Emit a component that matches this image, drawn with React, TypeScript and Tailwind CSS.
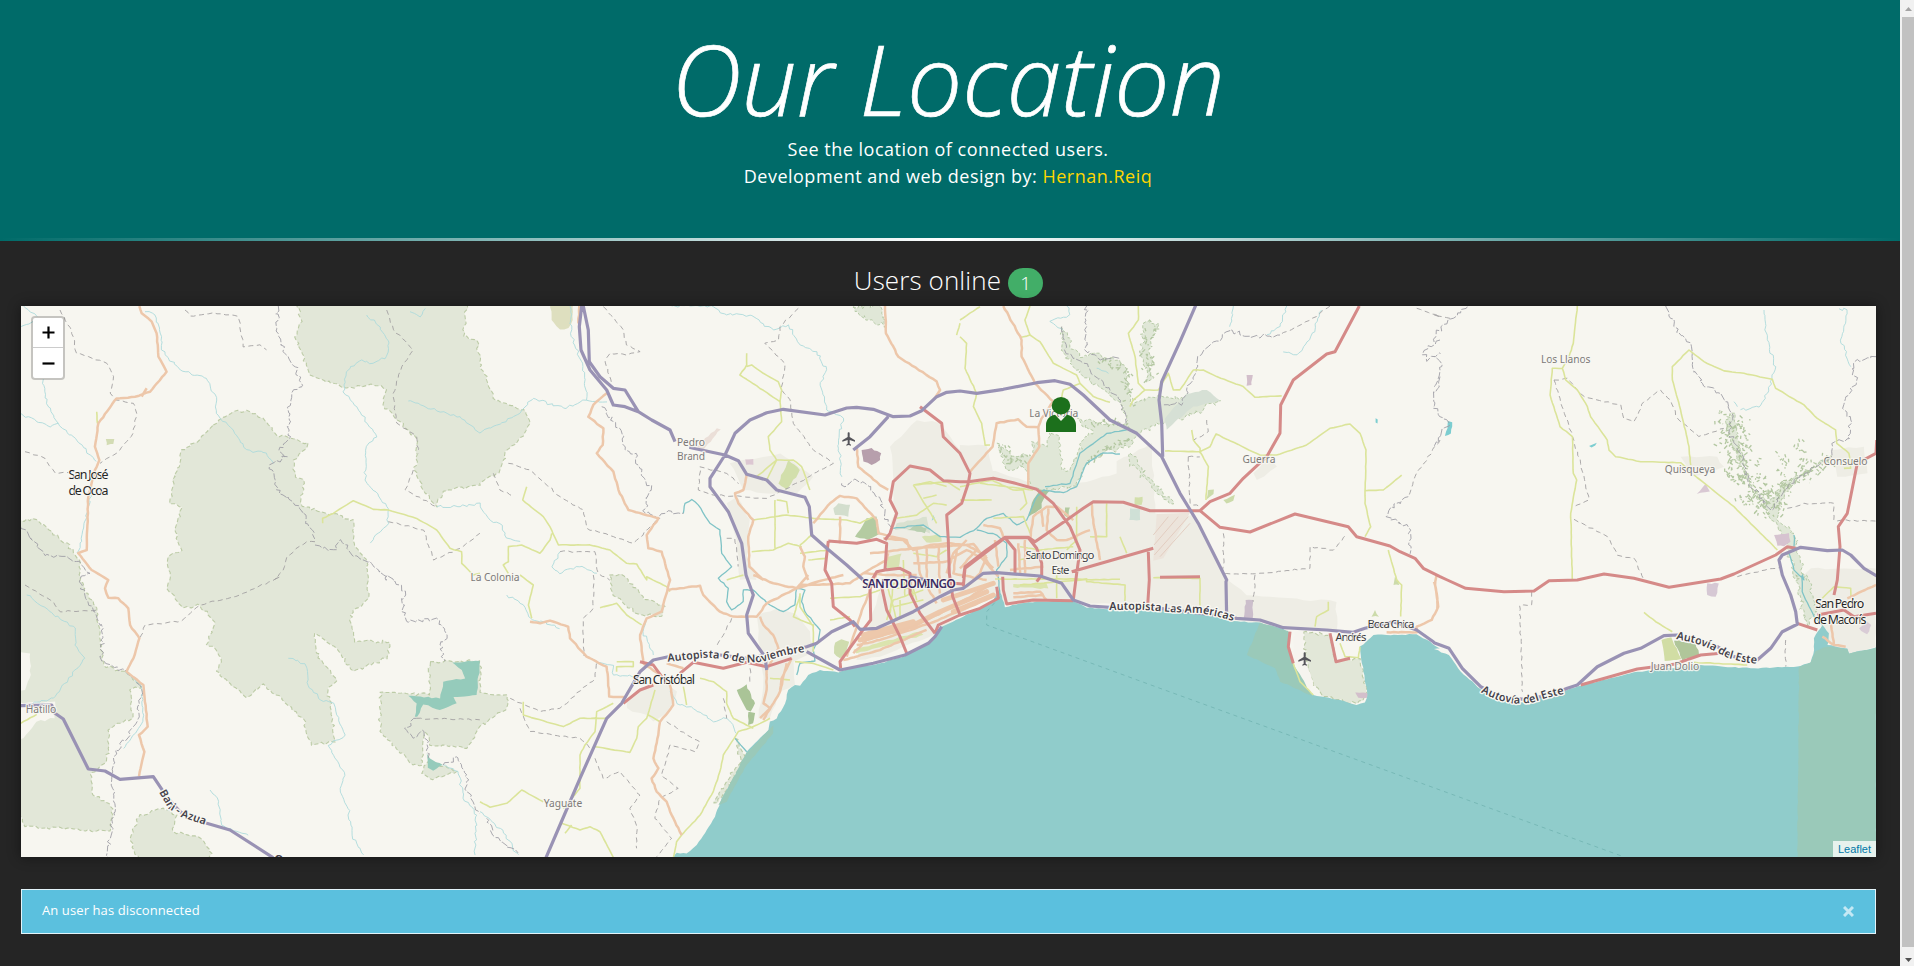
import React from "react";
import { MdFlight } from "react-icons/md";

// Survey sheets: every sheet has its own origin on the page and is digitised at three units per pixel.
const SHEETS: Record<string, [number, number]> = {
  A: [0, 290],
  B: [480, 290],
  C: [960, 290],
  D: [1434, 290],
  E: [0, 575],
  F: [480, 575],
  G: [960, 575],
  H: [1434, 575],
  J: [780, 440],
};

type Pt = [number, number];

function points(line: string): Pt[] {
  const out: Pt[] = [];
  let origin: Pt = [0, 0];
  for (const token of line.split(/[\s|]+/)) {
    if (!token) continue;
    if (SHEETS[token]) {
      origin = SHEETS[token];
      continue;
    }
    const [x, y] = token.split(",").map(Number);
    out.push([origin[0] + x / 3, origin[1] + y / 3]);
  }
  return out;
}

function noise(seed: number) {
  const v = Math.sin(seed * 127.1 + 311.7) * 43758.5453;
  return v - Math.floor(v) - 0.5;
}

// Subdivides a line and displaces the new vertices, for natural edges.
function roughen(pts: Pt[], amount: number, step: number): Pt[] {
  const out: Pt[] = [pts[0]];
  for (let i = 1; i < pts.length; i++) {
    const [x0, y0] = pts[i - 1];
    const [x1, y1] = pts[i];
    const n = Math.max(1, Math.round(Math.hypot(x1 - x0, y1 - y0) / step));
    for (let k = 1; k <= n; k++) {
      const t = k / n;
      const edge = k === n ? 0.3 : 1;
      const x = x0 + (x1 - x0) * t;
      const y = y0 + (y1 - y0) * t;
      out.push([x + noise(x + y * 3) * amount * edge * 2, y + noise(y + x * 5) * amount * edge * 2]);
    }
  }
  return out;
}

function toPath(lines: string[], opts: { rough?: number; step?: number; close?: boolean } = {}) {
  return lines
    .map((line) => {
      let pts = points(line);
      if (opts.close) pts = [...pts, pts[0]];
      if (opts.rough) pts = roughen(pts, opts.rough, opts.step ?? 4);
      return "M" + pts.map((p) => p[0].toFixed(1) + " " + p[1].toFixed(1)).join("L") + (opts.close ? "Z" : "");
    })
    .join("");
}

const SEA = [
  "F 578,848 590,833 620,836 650,810 680,765 705,725 725,670 765,605 795,550 800,530 865,465 870,440 890,430 915,385 925,345 945,330 960,332 985,300 1020,285 1075,292 1120,277 1190,268 1275,243 1345,205 1365,188 1385,155 1440,130 G 0,130 50,103 100,80 115,45 125,60 135,97 180,85 230,80 340,78 380,98 430,102 600,103 700,108 820,138 900,143 970,162 990,172 985,215 1000,265 1020,320 1060,360 1140,375 1190,390 1215,382 1222,360 1210,290 1200,215 1240,180 1280,180 1370,178 1410,200 1440,220 H 0,222 45,240 80,290 140,343 200,375 270,382 400,345 440,332 600,292 660,285 800,270 950,280 1090,275 1130,262 1140,225 1140,190 1165,150 1185,175 1180,210 1240,220 1245,235 1326,218 1326,900 -3000,900",
];
const SEA_RESERVE = [
  "H 1095,276 1130,262 1145,228 1180,215 1240,222 1245,236 1326,218 1326,860 1090,860",
  "G 900,143 985,168 985,215 1000,265 1055,362 960,320 945,280 860,240",
  "F 798,535 880,450 880,475 800,570 740,680 715,690",
];

const FOREST = [
  "A 640,405 700,365 740,360 790,385 830,435 925,460 880,510 885,560 910,570 905,650 1060,690 1065,770 1100,810 1105,870 E 1105,70 1050,120 1065,200 1170,200 1160,250 1060,290 1010,220 945,175 955,250 1010,310 985,350 1005,500 935,510 910,430 865,390 790,325 740,368 650,290 665,260 640,215 620,210 645,140 600,90 550,100 500,40 A 510,870 505,800 545,780 525,720 545,650 510,640 515,600 545,480 600,450",
  "A 890,40 905,95 885,140 930,255 1040,295 1120,285 1160,300 1150,345 1255,450 1245,540 1270,600 1310,650 1330,605 1440,585 B 0,580 60,540 80,480 130,440 150,400 130,360 40,325 20,260 0,235 A 1440,220 1430,150 1390,140 1400,40",
  "A 50,690 110,690 200,760 240,820 E 240,20 290,100 310,270 380,295 425,335 390,345 400,430 330,460 320,560 270,600 275,650 340,700 330,768 75,755 50,700",
  "E 415,855 390,790 420,720 490,700 530,720 520,770 600,790 635,835 630,855",
  "E 1290,260 1440,258 F 0,350 80,360 80,400 0,455 E 1440,455 1400,520 1290,510 1275,470 1265,570 1240,570 1140,470 1140,350 1220,355 1290,360",
  "E 1285,560 1370,590 1290,612 1265,595",
  "F 388,0 430,0 500,75 555,95 545,125 480,120 400,60",
  "F 765,490 795,550 725,670 702,685 760,590 785,560",
  "G 1030,172 1110,180 1128,260 1200,250 1222,360 1190,385 1090,365 1060,330 1040,260",
];
const FOREST_FINE = [
  "C 305,110 340,180 370,200 400,190 480,210 500,250 510,340 590,320 690,330 780,330 700,375 590,400 530,440 505,470 430,490 380,520 350,590 250,600 210,590 190,520 140,540 110,460 150,490 220,500 215,455 260,470 270,430 300,440 305,540 330,540 370,450 400,430 350,385 420,400 500,410 490,350 430,300 370,260 310,190",
  "C 550,100 600,100 570,150 575,270 560,270 545,180",
  "C 510,490 560,560 640,640 590,605 510,520",
  "D 880,380 905,370 920,480 940,570 1000,640 1040,590 1170,510 1195,500 1100,560 1050,610 1030,690 1080,730 1090,790 1120,870 1085,870 1050,740 1015,690 960,600 910,500 885,440",
  "H 1085,0 1120,0 1145,110 1120,150 1100,80",
  "B 1120,50 1200,50 1215,110 1180,95 1140,75",
];
const CLEARING = ["E 50,232 90,235 92,300 75,345 50,345", "E 50,385 165,380 165,430 110,440 70,490 50,500"];

const URBAN = [
  "J 335,130 390,75 440,0 540,30 580,70 760,130 830,150 1010,100 1010,65 1115,10 1125,220 1240,225 1330,400 1330,500 C 720,870 G 720,105 600,100 340,78 135,90 J 640,465 540,525 465,580 300,650 230,660 270,540 320,400 320,300 345,220",
  "B 1230,470 1310,390 1380,400 1440,480 C 0,465 80,465 100,550 25,580 B 1440,570 1300,530 1240,570",
  "G 720,0 780,0 860,60 1130,80 1130,165 970,158 820,135 720,105",
  "F 830,120 890,100 945,115 990,170 1000,230 940,260 945,330 900,350 870,430 835,430 850,330 840,220",
  "F 440,380 480,340 540,320 590,350 575,400 520,440 500,420 440,400",
  "B 750,520 900,490 1000,560 950,610 850,610 790,600",
  "B 740,640 770,620 810,690 800,800 830,870 780,870 770,750",
  "D 1190,480 1290,470 1300,550 1210,560",
  "D 1130,835 1326,835 H 1326,0 1326,215 1245,235 1180,205 1165,150 1140,120 1110,0",
  "D 740,500 850,500 870,530 780,560",
  "C 880,550 930,500 950,530 890,570",
];

const PATCHES: [string, string][] = [
  ["B 210,40 280,40 278,90 265,115 240,118 215,90", "#dedfbf"],
  ["B 1145,480 1175,475 1203,490 1200,510 1175,525 1150,515", "#b79fac"],
  ["B 925,510 960,540 920,600 895,580", "#d2dfab"],
  ["B 795,508 820,508 820,524 798,524", "#dcc7d2"],
  ["B 650,470 710,415 722,418 670,480", "#ebdfd8"],
  ["J 240,270 260,235 290,230 290,260 300,280 265,300 225,290", "#b4cba1"],
  ["J 160,205 175,190 210,195 205,230 165,225", "#d3decd"],
  ["J 325,350 365,340 355,383 320,385", "#d8e2b2"],
  ["J 350,250 440,230 450,280 400,265 345,270", "#d9e1d0"],
  ["J 380,270 410,255 440,265 435,280", "#b9cfb0"],
  ["J 425,290 480,285 485,305 440,308", "#d8e2b2"],
  ["J 700,432 800,430 805,446 700,442", "#dbe4ae"],
  ["J 220,630 420,575 430,585 230,640", "#dbe4ae"],
  ["F 770,345 800,328 815,370 825,385 812,410 800,405", "#aac497"],
  ["F 805,410 825,415 820,445 805,450", "#aac497"],
  ["F 1065,203 1085,193 1108,200 1100,232 1080,250 1062,235", "#cfdcae"],
  ["H 682,195 712,187 742,252 692,257", "#d1dda4"],
  ["H 720,197 785,200 795,240 745,256", "#b0c69a"],
  ["D 1020,735 1065,730 1070,755 1050,768 1030,768", "#d6c3d0"],
  ["D 788,612 815,580 828,605", "#d9c8d3"],
  ["C 860,255 878,255 875,285 860,287", "#d3bfcb"],
  ["G 857,75 880,75 878,130 850,130", "#cbbecb"],
  ["G 1185,352 1225,355 1222,368 1195,368", "#d3bfcb"],
  ["H 820,25 855,25 845,65 820,60", "#d6c8d4"],
  ["C 215,640 240,598 268,602 245,640 245,655 205,680", "#a9c49c"],
  ["C 315,652 330,652 325,685 312,675", "#b4cba1"],
  ["C 510,655 540,658 540,690 508,690", "#cfe0d6"],
  ["C 524,622 548,620 545,645 524,645", "#d2dfab"],
  ["C 680,310 740,300 780,332 700,350 620,420 615,385", "#d6e0d5"],
  ["C 790,630 825,615 820,632 800,640", "#ccdbaa"],
  ["C 745,600 762,598 760,612 740,628", "#ccdbaa"],
  ["A 318,447 343,447 340,462 320,466", "#d3dcb4"],
  ["D 42,393 54,397 50,430 32,437 40,415", "#7ccdd0"],
  ["D 465,468 488,458 484,466 472,473", "#7ccdd0"],
  ["C 1247,385 1253,388 1252,400 1247,398", "#7ccdd0"],
  ["B 1360,675 1365,685 1355,692", "#9bd6dc"],
  ["E 1355,262 1440,258 1430,360 1360,366 1370,385 1320,405 1270,388 1252,425 1245,425 1250,385 1225,362 1320,370 1330,320 1395,310 1385,285", "#95cbbb"],
  ["E 1280,535 1290,550 1328,570 1300,587 1283,578", "#95cbbb"],
  ["H 1300,140 1312,150 1300,178 1275,160", "#d9ccd6"],
  ["G 1003,170 1030,170 1030,235 1060,330 1050,350 1020,300 1000,240", "#f6f4ef"],
  ["G 1200,215 1238,202 1225,220", "#f7f6f0"],
  ["G 1305,5 1318,30 1300,30", "#ccdbaa"],
  ["G 1245,105 1257,125 1235,125", "#ccdbaa"],
];

const AIRSTRIP = ["C 590,672 690,668 610,805 580,812"];
const HATCH = ["C 580,735 625,680", "C 582,765 655,680", "C 583,795 685,680", "C 600,800 690,700"];

const RIVERS = [
  "A 62,45 110,80",
  "A 62,110 100,95",
  "A 435,65 465,75 480,130 485,180 540,240 620,265 650,330 650,370 700,420 740,480 800,490 820,520",
  "A 130,268 140,340 175,400 230,450 290,515",
  "A 62,370 110,395 150,412 175,400",
  "A 275,600 240,760 230,790",
  "A 1100,75 1140,110 1168,160 1160,200 1120,220 1085,210 1040,245 1030,305 1070,350 1130,440 1100,470 1095,570 1160,650 1165,700 1110,760",
  "A 1225,333 1320,365 1380,380 1440,430 B 0,430 50,405 120,370 160,325 250,355 320,330 380,335",
  "A 1230,65 1260,80 1275,55",
  "A 1310,650 1380,650 1440,640 B 0,650 30,690 60,700 80,745 120,755",
  "B 240,785 215,830 240,850 300,830 350,850",
  "B 270,48 272,130 310,230 320,330",
  "B 575,48 700,50 740,75 810,75 880,120 925,105 960,165 1010,185 1040,240 1020,285 1040,360 1090,385 1075,450 1085,560",
  "C 320,48 330,75 270,95 310,120",
  "C 820,48 810,110",
  "C 980,48 960,110 920,135",
  "C 1085,60 1050,150 1010,195 970,185",
  "C 410,235 445,250",
  "D 990,60 1000,150 1025,230 1000,310 975,350 920,360",
  "D 1215,56 1240,60 1220,150 1250,230",
  "D 900,335 910,350",
  "E 80,60 150,110 225,160 225,210 255,250 160,370 80,390",
  "E 865,250 915,265 925,330 960,375 1000,385 1035,480 985,510 1035,600 1020,650 1045,700 1055,780 1090,840",
  "E 375,290 425,335 430,440 370,520",
  "E 1330,570 1375,590 1390,670 1430,720 1425,840",
  "E 630,645 655,680 665,750 745,780",
  "F 80,60 130,90 150,130 240,160",
  "F 570,350 600,390 640,400 700,440 740,430 770,475",
  "F 500,130 490,170 520,240",
  "F 0,710 60,760 115,840",
  "F 350,265 400,270 400,300 480,305",
];
const RIVERS_MAJOR = [
  "B 610,670 615,640 635,628 655,645 690,700 720,720 725,790 755,830 715,865 F 715,10 745,40 740,80 755,105 790,80 790,45 820,45 870,90 910,110 945,90 950,40 975,45 965,80 975,110 1020,165 1015,200 1000,225 1005,258 960,265 950,300",
  "B 1240,715 1330,705 1380,740 1440,742 C 0,742 50,715 80,685 130,670 170,705 200,690 230,620 250,600",
  "C 50,720 110,735 140,760 140,800 110,840 G 115,10 120,60",
  "C 250,600 310,608 350,590 380,520 430,488 480,492",
  "C 255,590 330,580 360,490 440,430 500,420",
  "D 1065,790 1080,840 1110,870 H 1105,0 1105,50 1140,125",
  "D 1080,735 1080,770",
  "F 765,490 800,530",
  "H 1165,150 1140,125",
];

const BORDERS = [
  "A 180,60 215,120 230,190 320,220 340,260 330,310 350,330 400,340 410,370 400,430 350,490 300,520",
  "A 75,485 135,505 165,548 205,548",
  "A 555,60 570,78 640,68 715,80 730,170 780,165 800,180",
  "A 1160,60 1180,120 1240,180 1205,230 1180,310 1190,400 1250,440 1255,490",
  "A 1165,695 1270,720 1300,810 1380,775 1440,730",
  "A 945,755 920,755 860,800 850,840 825,868 E 840,5 720,60 600,90 545,138 435,150 420,190",
  "A 1240,540 1215,600 1310,650",
  "E 75,30 160,80 180,110 290,105",
  "E 1250,430 1440,435",
  "B 85,520 150,540 240,620 310,660 320,715 400,740 460,760 530,690",
  "B 40,550 60,600 100,620",
  "B 240,785 345,785 355,850 390,870",
  "B 370,50 430,120 440,165 480,185 440,195 390,190 375,215 395,280",
  "B 955,55 900,110 895,150 855,160 915,220 905,300 930,330 940,400 1000,480 1060,520 1000,550 960,575 860,625 700,615 655,600 660,530 740,550 775,580",
  "B 740,745 765,745 775,830",
  "F 340,0 340,100 310,130 310,240 350,260 345,310 240,400 180,410 90,370",
  "F 120,400 150,470 300,490 330,520",
  "F 345,550 370,610 420,590 480,660 450,700 470,750 470,820",
  "F 560,440 620,480 660,500 645,530 570,510 545,600 595,640 540,670 525,730 575,790 530,845",
  "F 755,130 710,215",
  "F 810,280 810,330",
  "F 730,370 740,430",
  "C 1110,48 1070,80 960,135",
  "C 1370,55 1440,80 D 0,75 50,85",
  "C 685,500 690,640 720,650",
  "C 685,500 720,500",
  "C 790,730 790,850 900,850 1050,835 1050,770 1120,780 1160,735",
  "C 740,390 745,425 700,450",
  "C 1440,450 1370,550 1345,620",
  "G 885,0 880,80",
  "D 360,270 400,265 450,320 560,345 570,385 600,395 630,335 680,300 710,330 730,385 795,440 870,415",
  "D 360,270 415,440 440,520 465,630 420,650",
  "D 420,688 520,740 550,795 600,805 630,868",
  "D 1060,655 1110,640 1200,640 1200,690 1326,693",
  "D 910,860 1040,830",
  "H 293,50 293,90 257,92 265,350",
  "H 1055,195 1055,275",
];
const BORDERS_WINDING = [
  "A 835,48 830,110 850,185 885,230 905,290 875,310 865,380 870,440 835,480 860,500 810,525 830,600 900,655 945,745",
  "A 945,765 1000,780 1020,750 1060,800 1110,815 1160,870 E 1160,0 1215,50 1205,110 1225,140 1310,130 1340,180 1320,210 1335,260",
  "A 62,710 130,790 180,800 240,815 270,850 240,868 E 240,20 290,130 310,160 305,260 380,292 425,340 410,440 340,545 335,600 345,700 320,845",
  "B 365,350 430,440 435,480 470,490 465,520 515,600 490,660 540,685 545,670 565,662 610,670",
  "B 1085,580 1095,590 1120,570 1150,575 1200,620 1215,680 1240,715",
  "E 1250,430 1215,460 1240,488 1265,465 1285,500 1285,550",
  "E 1330,570 1370,545 1400,600 1400,650 1440,715",
  "F 20,730 40,780 115,835",
  "C 380,48 375,180 420,210 480,205",
  "C 960,135 870,140 810,120 715,200 715,230 690,280 670,340 610,345",
  "C 1440,150 1390,180 1400,215 1440,190",
  "D 100,50 50,85 20,110 0,160",
  "D 0,290 25,230 0,200",
  "C 1440,260 1420,320 D 0,355 45,400 0,468",
  "C 1345,620 1285,660 1280,680 1345,710 1350,790",
  "D 695,48 720,110 770,160 775,225 810,290 860,310 895,370 885,430 930,500 940,570 1015,660 1050,600 1160,520 1195,500",
  "D 1326,200 1270,210 1250,235 1270,270 1235,320 1230,360 1250,390 1245,445 1200,455 1195,500",
  "C 305,110 320,190 370,220 480,330 500,400",
];

const TERTIARY = [
  "A 968,700 968,685 1000,670 1060,632 1120,658 1165,660 1250,685 1310,720 1350,775 1385,785 1385,820 1420,855 1440,850",
  "B 85,850 70,825 85,815 85,770 125,765 180,790 210,750 215,730",
  "B 140,590 128,630 190,680 210,710 235,765 330,765 390,780 440,820 470,822 500,870 F 500,5 560,35 570,50",
  "F 120,0 160,30 145,90 155,130",
  "B 800,190 800,225 780,255 900,335 905,300 895,275 850,250 815,225 800,230",
  "B 900,335 905,395 865,440 870,480 890,510 830,560",
  "B 890,510 860,570",
  "B 890,510 940,510 965,530 990,600",
  "B 885,630 885,775",
  "B 820,690 920,675 1000,685 1100,690 1140,700 1180,680",
  "B 815,785 880,780 925,760 965,770",
  "B 890,630 920,635 925,670",
  "B 985,810 1040,805",
  "B 995,735 960,765",
  "B 740,870 790,855",
  "B 1305,585 1400,575 1440,600",
  "B 1250,685 1310,675 1360,640 1400,645",
  "F 130,380 130,420 250,455 300,430 380,430",
  "F 400,385 350,410 345,470 315,510 300,540 300,640 250,700",
  "F 345,515 450,532 470,490 475,455 500,430 525,345",
  "F 505,420 540,440",
  "F 0,680 30,697 80,685 125,645 190,680",
  "F 245,745 300,765 330,755 360,770 400,848",
  "F 255,775 275,750",
  "F 580,848 590,800 605,780 660,720 700,650 720,590 730,540 775,470 820,455 870,430",
  "F 660,310 700,320 740,350 740,385 760,430 820,460",
  "F 410,260 460,260 460,275 410,275 410,290",
  "F 610,335 620,390",
  "F 945,260 1000,265 1060,285",
  "F 960,60 940,125 1000,150 1000,230",
  "F 360,98 410,85 440,120 485,150",
  "F 870,310 930,315",
  "C 210,48 195,90 210,135 180,143",
  "C 210,135 240,155 280,220 350,255 360,280 400,320 450,337",
  "C 303,330 310,300 360,280",
  "C 535,48 535,90 505,130 525,200 535,280 555,300 520,330 510,350",
  "C 555,300 595,300 625,250 640,300 660,300 700,240 730,240 770,260 850,290 885,322 965,318",
  "C 0,90 60,50",
  "C 0,140 20,160 15,235 50,310 40,350 65,400 75,465 90,465",
  "B 1440,100 1430,135",
  "C 615,483 720,485 745,530 738,630",
  "C 695,420 700,450 720,475 720,490",
  "C 720,485 750,470 768,432 900,495 950,495 1040,465 1110,415 1170,402 1200,430 1218,480 1215,640 1232,710 1215,740",
  "C 1215,602 1270,600 1325,555",
  "C 1285,780 1310,870 G 1325,30 1322,125",
  "C 440,670 440,740 390,740",
  "C 0,630 95,630",
  "C 0,590 95,570 160,600 190,600 200,640 180,660",
  "C 480,740 500,790",
  "G 105,12 380,12 380,20 495,30 495,100",
  "G 580,8 720,10 720,95",
  "G 1105,80 1105,105 1070,125 1065,155",
  "G 1000,265 1020,320 1060,360",
  "G 1140,205 1155,245 1195,248 1200,215",
  "G 290,0 290,70",
  "D 430,48 418,160 405,200 385,235 355,235 348,315 378,410 415,440 418,550 428,570 410,670 415,870",
  "D 385,235 395,270 430,300 460,350 470,380 520,450 525,480 545,500 620,515 740,518 770,545",
  "D 770,525 765,470 740,360 715,270 715,230 765,180 810,215 870,243 930,250 1015,268 1025,295 1110,345 1150,385 1205,420 1208,460 1245,490 1250,535 1230,535",
  "D 780,555 900,650 1030,780",
  "H 630,112 665,140 715,170",
  "H 780,262 940,270",
  "H 1165,70 1200,35 1250,40 1250,70",
  "E 62,445 110,418",
  "A 290,365 292,400",
  "J 400,135 450,125 500,140",
  "J 400,135 470,250",
  "J 430,175 470,165",
  "J 545,180 635,180",
  "J 600,130 720,145 760,150",
  "J 60,340 145,330",
  "J 320,430 350,540 430,500",
  "J 340,500 430,480",
  "J 420,440 340,430 330,520",
  "J 720,435 900,420 1020,418",
  "J 890,200 890,300 860,330",
  "J 980,190 980,290 950,290",
  "J 150,475 240,470 300,450",
  "J 150,540 210,530",
  "J 370,360 375,470",
  "J 360,480 360,530",
  "J 385,420 400,470",
  "J 60,460 60,500 100,560",
  "J 350,445 400,445 410,480",
  "J 640,235 730,230 750,280",
  "J 720,320 780,330 880,320",
  "J 715,360 790,350",
  "J 320,540 340,480 430,450",
  "J 400,340 470,350 500,330",
];

const SECONDARY = [
  "A 418,48 425,70 455,95 470,130 475,200 500,245 450,305 405,320 350,325 295,400 285,470 298,510 285,540 265,620 260,780 235,790 255,815 275,840 325,870 E 325,15 315,40 325,68 355,70 385,100 390,150 418,190 400,250 380,290 430,330 443,455 417,480 433,530 417,605",
  "A 425,320 440,295",
  "B 298,48 295,100",
  "B 380,310 340,345 325,380 370,415 368,465 350,490 400,545 415,600 445,660 535,685 500,735 505,775 545,785 570,870 F 570,15 545,110 500,130 480,180 490,265 540,300 570,330 580,390 540,440 535,480 520,550 535,580 515,610 530,650 560,680 575,720 605,780",
  "F 565,45 660,32 670,60 720,110 760,125 830,125 860,85 950,40 1030,15 1090,0",
  "F 820,0 880,25 950,40 985,0",
  "F 150,140 180,145 210,137 265,155 270,190 320,245 380,275 388,365 440,367",
  "F 840,125 850,150 880,180 895,220 860,285 860,345 850,385 870,400 840,430",
  "F 920,265 900,350 850,435",
  "F 935,250 905,310 900,345",
  "F 560,265 610,280",
  "B 1215,48 1218,130 1255,200 1370,275 1380,300 1360,330",
  "B 1130,470 1135,530 1200,585 1225,600",
  "B 800,555 790,600 765,610 775,640 820,690 805,740 808,830 850,870",
  "B 1000,700 1050,640 1080,618 1130,625 1190,690 1195,730 1280,750 1290,780",
  "B 1080,680 1080,760",
  "C 130,48 185,150 185,200 225,280 280,335 245,385 235,410 238,470 205,520 205,590",
  "C 235,412 200,410 175,388 110,400 98,470 30,545",
  "B 960,770 975,800 970,830 985,870",
  "B 1150,850 1220,810 1225,790",
  "G 1430,0 1425,30 1435,95 1415,135 1370,155 1370,172 1280,172",
  "H 0,20 10,70 10,100",
  "H 1165,185 1200,210 1235,215",
  "H 1190,140 1200,210",
  "H 1240,70 1326,30",
  "J 310,295 370,300 400,330 450,315 500,310 560,315 620,350",
  "J 270,340 400,325 500,318 580,312 640,385",
  "J 500,365 560,330 600,350 655,410",
  "J 220,640 260,600 400,560 520,500 640,430",
  "J 230,615 300,600 450,550 640,470",
  "J 410,330 420,400 470,490",
  "J 440,325 440,440",
  "J 475,310 480,460",
  "J 530,330 520,400 620,420",
  "J 400,370 500,365",
  "J 190,660 300,630 440,570",
  "J 200,650 250,500 290,400",
  "J 410,405 330,405 250,400 210,430 60,435",
  "J 750,300 760,230 800,200 830,200 880,240",
  "J 785,210 790,260",
  "J 805,205 800,270 830,300 860,300 930,270",
  "J 935,190 940,250 960,360",
  "J 645,300 655,380",
  "J 735,300 735,400",
  "J 715,310 720,400",
  "J 690,390 790,380",
  "J 610,255 660,265 670,290",
  "J 700,460 780,455 800,480",
  "J 700,472 790,465",
  "J 560,300 520,340 500,400",
  "J 590,330 540,385",
  "J 620,350 600,400 560,440",
];
const SECONDARY_WIDE = ["J 240,600 390,560 480,515 620,455", "J 520,515 640,465", "J 490,480 640,430", "J 250,585 400,545"];

const TRUNK = [
  "C 1198,48 1125,185 1100,192 1000,270 962,345 960,430 920,500 850,565 810,610 750,635 720,662 690,662 570,662 490,637 400,635 370,655 320,690 225,755 205,742 135,742 80,780 15,830 10,865",
  "C 720,662 780,712 870,726 1005,672 1165,710 1190,740 1290,768 1320,785 1365,805 1390,835 1440,860 H 40,15 95,40 210,50 300,48 345,17 430,15 510,-3 600,10 705,37 860,12 D 900,852 1025,795 1060,770 1085,775",
  "B 1320,350 1385,400 1390,440 1440,490 C 0,490 30,550 25,580",
  "J 565,125 540,125 490,122 450,90 390,78 340,125 330,180 350,220 330,280 315,300",
  "J 565,125 640,115 700,128 770,148 820,190 870,260 900,330 890,400 880,480",
  "J 565,130 545,190 500,225 505,300 508,400 518,470 540,525",
  "J 145,303 230,310 290,298 320,310 315,390 290,395 270,430 272,540 245,575 180,665 182,685",
  "J 145,303 135,390 155,430 160,500 210,540 225,560",
  "J 315,390 360,385 390,400 390,460 420,520 465,580",
  "J 305,440 320,510 360,590 380,640",
  "J 550,440 555,385 675,293 745,293 770,325 785,370 785,405 770,425",
  "J 675,293 705,330 705,400",
  "J 520,430 550,432",
  "C 335,845 580,775",
  "C 565,785 568,870 G 563,90",
  "C 600,862 720,860",
  "J 465,580 475,555 540,525 600,505 655,475 650,440",
  "J 668,410 670,450 680,492 760,480 880,482",
  "D 1328,450 1326,490 1270,520 1240,670 1213,710 1218,770 1210,870 H 1200,60",
  "H 1090,145 1150,165",
  "H 1150,120 1230,105 1260,125 1326,115",
  "H 440,330 610,282 720,268 800,240 860,235",
  "G 990,170 985,215 1000,265",
  "G 1110,175 1128,260 1170,250",
  "F 430,385 480,345 520,330",
  "F 480,260 520,270 545,305",
  "F 600,295 640,262 730,280 800,262 860,275 935,250",
];

const MOTORWAY = [
  "B 306,40 298,110 303,180 330,240 380,300 400,345 435,350 475,365 515,390 570,420 585,455",
  "B 628,472 640,475 735,495 775,512 800,553 860,570 890,600 975,622 988,650 995,735 1040,775 1100,825 1150,870",
  "J 390,410 440,420 480,440",
  "B 308,40 325,120 328,215 360,260 400,295 435,300 475,365",
  "F 860,285 855,245 805,175 800,120 820,60 798,0 B 785,760 745,665 690,590 690,565 735,495 765,430 810,390 860,368 910,358 1035,375 1100,354 1130,352 1180,358 1240,380 1290,378 1325,362 1370,320 1400,307 1440,303 C 50,310 130,298 230,278 285,272 330,283 370,315 450,390 530,430 605,500 660,610 715,700 755,780 800,870 G 798,20 800,130",
  "B 1120,480 1170,440 1225,380",
  "C 708,44 660,155 605,275 597,330 605,400 608,500",
  "F 195,855 240,750 300,610 380,430 425,385 480,290 520,255 565,245 650,240 720,240 800,250 900,235 980,215 J 110,610 155,575 220,545 240,568 290,565 400,515 480,470 520,450 550,445 610,400 650,398 780,408 845,430 880,480 930,498 990,502",
  "F 980,230 1080,285 1180,265 1275,240 1345,205 1365,185 1385,155",
  "G 445,97 600,100 760,120 830,130 900,135 970,158 1100,165 1180,172 1215,160 1300,140 1370,165 1420,200 H 0,203 45,220 85,280 140,335 200,365 270,373 350,360 400,340 430,330 490,275 570,235 620,220 690,182 730,180 800,205 850,215 900,245 970,255 1010,220 1045,170 1090,148 1085,110 1070,60 1045,0 D 1035,810 1045,795 1100,772 1180,782 1225,780 1250,795 1290,835 1328,858",
  "E 62,392 155,390 165,415 190,432 265,582 315,588 360,613 460,605 500,665 540,710 620,745 690,765 830,855",
];

const FERRY = ["G 120,65 80,110 80,150 600,340 1000,485 1440,645 H 560,842"];

const SHRUB_AXES: [string, number][] = [
  ["D 870,390 890,390 900,460 920,500 940,570 970,600 1015,660", 24],
  ["D 1020,650 1050,600 1100,560 1180,510", 14],
  ["D 1040,490 1050,520 1045,590", 8],
  ["D 1090,450 1115,500 1110,540", 8],
  ["D 860,550 900,560 940,560", 8],
  ["D 910,620 960,640 1000,670", 10],
  ["C 565,100 570,270", 10],
  ["C 420,210 500,240 510,340", 7],
  ["C 130,460 150,520 200,500", 8],
  ["C 400,400 430,390 500,410", 7],
  ["C 390,520 430,480 510,450", 6],
];

function shrubs() {
  let d = "";
  SHRUB_AXES.forEach(([axis, spread], n) => {
    roughen(points(axis), 0.5, spread > 20 ? 0.55 : spread > 12 ? 1 : 1.7).forEach(([x, y], i) => {
      const px = x + noise(i * 3 + n * 91) * spread * 2 * (0.35 + Math.abs(noise(i * 7)));
      const py = y + noise(i * 5 + n * 57) * spread * 0.8;
      d += `M${px.toFixed(1)} ${py.toFixed(1)}l${(noise(i * 11) * 7).toFixed(1)} ${(noise(i * 13) * 7).toFixed(1)}`;
    });
  });
  return d;
}

type LabelProps = { x: number; y: number; w: number; size: number; color: string; weight?: number; children: string };

function Label({ x, y, w, size, color, weight = 400, children }: LabelProps) {
  return (
    <text x={x - w / 2} y={y} textLength={w} fontSize={size} fontWeight={weight} fill={color} stroke="#f8f7f2" strokeOpacity={0.85} strokeWidth={2.4} strokeLinejoin="round" paintOrder="stroke">
      {children}
    </text>
  );
}

function RoadLabel({ id, path, length, children }: { id: string; path: string; length: number; children: string }) {
  return (
    <>
      <path id={id} d={toPath([path])} fill="none" />
      <text fontSize={11} fontWeight={600} fill="#45424a" stroke="#f8f7f2" strokeWidth={2.8} strokeLinejoin="round" paintOrder="stroke" textLength={length}>
        <textPath href={"#" + id} textLength={length}>{children}</textPath>
      </text>
    </>
  );
}

const TOWN = "#242424";
const VILLAGE = "#7d7a78";

function MapCanvas() {
  return (
    <svg viewBox="21 306 1855 551" className="block h-[551px] w-full bg-[#f7f6f0] font-['Noto_Sans',sans-serif]" fill="none" strokeLinejoin="round">
      <path d={toPath(URBAN, { close: true, rough: 1.2, step: 8 })} fill="#eeede5" />
      <path d={toPath(FOREST, { close: true, rough: 1.7, step: 3.2 })} fill="#e2e7d8" stroke="#bccba6" strokeWidth={1.1} strokeDasharray="4 2.5" />
      <path d={toPath(FOREST_FINE, { close: true, rough: 2.6, step: 2.8 })} fill="#e0e7d7" stroke="#b2c7a2" strokeWidth={0.9} strokeDasharray="3 2" />
      <path d={toPath(CLEARING, { close: true, rough: 1 })} fill="#f7f6f0" />
      {PATCHES.map(([line, color]) => (
        <path key={line} d={toPath([line], { close: true, rough: 0.7 })} fill={color} />
      ))}
      <path d={toPath(AIRSTRIP, { close: true })} fill="#ece4db" />
      <path d={toPath(HATCH)} stroke="#dfc6b9" strokeWidth={0.8} />
      <path d={shrubs()} stroke="#b3c7a1" strokeWidth={1.3} />
      <path d={toPath(SEA, { close: true, rough: 0.5 })} fill="#90cccb" />
      <path d={toPath(SEA_RESERVE, { close: true, rough: 0.5 })} fill="#9ac9b9" />
      <path d={toPath(FERRY)} stroke="#74b5b3" strokeWidth={0.9} strokeDasharray="4 4" />
      <path d={toPath(RIVERS, { rough: 1.4, step: 3.2 })} stroke="#addadb" strokeWidth={0.9} />
      <path d={toPath(RIVERS_MAJOR, { rough: 0.5 })} stroke="#7fc3c6" strokeWidth={1.3} />
      <path d={toPath(BORDERS, { rough: 0.8 })} stroke="#a3a0a2" strokeWidth={0.9} strokeDasharray="5 3.5" />
      <path d={toPath(BORDERS_WINDING, { rough: 2.2, step: 3 })} stroke="#9f9ea6" strokeWidth={0.9} strokeDasharray="7 2" />
      <path d={toPath(TERTIARY, { rough: 0.25 })} stroke="#dbe49a" strokeWidth={1.6} />
      <path d={toPath(SECONDARY_WIDE)} stroke="#edc8ab" strokeWidth={5} strokeLinecap="round" />
      <path d={toPath(SECONDARY, { rough: 0.4 })} stroke="#edc7aa" strokeWidth={2.5} />
      <path d={toPath(TRUNK)} stroke="#d58a88" strokeWidth={3} />
      <path d={toPath(MOTORWAY)} stroke="#9992b4" strokeWidth={3.2} />

      <MdFlight x={841} y={431} width={16} height={16} color="#55545a" />
      <MdFlight x={1297} y={651} width={16} height={16} color="#55545a" />

      <Label x={88.5} y={479} w={40} size={12.4} color={TOWN}>San José</Label>
      <Label x={88.5} y={495} w={40} size={12.4} color={TOWN}>de Ocoa</Label>
      <Label x={691} y={446} w={28} size={10.3} color={VILLAGE}>Pedro</Label>
      <Label x={691} y={459.5} w={28} size={10.3} color={VILLAGE}>Brand</Label>
      <Label x={1053.8} y={417} w={49} size={10.3} color={VILLAGE}>La Victoria</Label>
      <Label x={1259} y={463} w={33} size={10.3} color={VILLAGE}>Guerra</Label>
      <Label x={1565.7} y={363} w={49.5} size={10.3} color={VILLAGE}>Los Llanos</Label>
      <Label x={1690} y={473} w={50.5} size={10.3} color={VILLAGE}>Quisqueya</Label>
      <Label x={1845.5} y={465} w={44} size={10.3} color={VILLAGE}>Consuelo</Label>
      <Label x={495} y={581} w={49} size={10.3} color={VILLAGE}>La Colonia</Label>
      <Label x={563} y={807} w={38.5} size={10.3} color={VILLAGE}>Yaguate</Label>
      <Label x={41} y={713} w={30.5} size={10.3} color={VILLAGE}>Hatillo</Label>
      <Label x={1675} y={669.5} w={48.5} size={10.3} color={VILLAGE}>Juan Dolio</Label>
      <Label x={1060} y={559} w={69} size={11.4} color="#3c3b3f">Santo Domingo</Label>
      <Label x={1060.5} y={574} w={18} size={11.4} color="#3c3b3f">Este</Label>
      <Label x={1391} y={628} w={47} size={11.4} color="#3c3b3f">Boca Chica</Label>
      <Label x={1351} y={641} w={31} size={11.4} color="#3c3b3f">Andrés</Label>
      <Label x={909} y={587.5} w={93.5} size={12.2} weight={600} color="#3b2c62">SANTO DOMINGO</Label>
      <Label x={664} y={684} w={62} size={12.4} color={TOWN}>San Cristóbal</Label>
      <Label x={1839.7} y={608} w={49} size={12.4} color={TOWN}>San Pedro</Label>
      <Label x={1840} y={624} w={53} size={12.4} color={TOWN}>de Macorís</Label>

      <RoadLabel id="road-noviembre" path="F 563,260 620,254 680,248 735,252 790,264 850,260 910,242 990,228" length={139}>Autopista 6 de Noviembre</RoadLabel>
      <RoadLabel id="road-americas" path="G 448,105 545,104 640,112 720,114 770,124 835,142" length={125}>Autopista Las Américas</RoadLabel>
      <RoadLabel id="road-este-west" path="H 140,352 190,375 240,386 290,384 340,368 410,352" length={87}>Autovía del Este</RoadLabel>
      <RoadLabel id="road-este-east" path="H 726,192 780,204 830,222 880,248 930,262 985,268" length={85}>Autovía del Este</RoadLabel>
      <RoadLabel id="road-azua" path="E 477,652 505,700 550,728 640,758" length={59}>Bani - Azua</RoadLabel>
      <RoadLabel id="road-azua-south" path="E 818,855 850,875" length={7}>C</RoadLabel>
    </svg>
  );
}

function ZoomControl() {
  return (
    <div className="absolute top-[10px] left-[10px] flex w-[34px] flex-col rounded-[4px] border-2 border-black/20 bg-white bg-clip-padding text-black">
      <button className="flex h-[30px] items-center justify-center border-b border-[#ccc]" aria-label="Zoom in">
        <svg className="size-[13px]" viewBox="0 0 13 13"><path d="M6.5 .5V12.5M.5 6.5H12.5" stroke="currentColor" strokeWidth="2.2" /></svg>
      </button>
      <button className="flex h-[30px] items-center justify-center" aria-label="Zoom out">
        <svg className="size-[13px]" viewBox="0 0 13 13"><path d="M.5 6.5H12.5" stroke="currentColor" strokeWidth="2.2" /></svg>
      </button>
    </div>
  );
}

function UserMarker() {
  return (
    <svg className="absolute top-[91px] left-[1025px] h-[35px] w-[30px]" viewBox="0 0 30 35" fill="#1c701c">
      <ellipse cx="15" cy="8.7" rx="9.3" ry="8.7" />
      <path d="M0 35V28C0 23 3.5 18.8 9 17.8L15 24L21 17.8C26.500 18.800 30 23 30 28V35Z" />
      <path d="M12.300 18.500H17.700L15 22.500Z" fill="#f3f5ef" />
    </svg>
  );
}

function ScrollBar() {
  return (
    <div className="flex h-full w-[14px] flex-col items-center bg-[#f1f1f1] pl-[2px]">
      <div className="flex h-[17px] w-full items-center justify-center">
        <svg className="h-[4px] w-[7px]" viewBox="0 0 7 4"><path d="M0 4L3.500 0L7 4Z" fill="#a3a3a3" /></svg>
      </div>
      <div className="w-full flex-1 bg-[#c1c1c1]" />
      <div className="flex h-[19px] w-full items-center justify-center pt-[6px]">
        <svg className="h-[4px] w-[7px]" viewBox="0 0 7 4"><path d="M0 0L3.500 4L7 0Z" fill="#505050" /></svg>
      </div>
    </div>
  );
}

export default function App() {
  return (
    <div className="flex h-[966px] w-[1914px] overflow-hidden bg-[#252525] font-['Open_Sans',sans-serif] text-white">
      <div className="flex min-w-0 flex-1 flex-col">
        <header className="flex h-[241px] flex-col bg-[#006b69]">
          <div className="flex flex-1 flex-col items-center pt-[22px] pr-[4px]">
            <h1 className="h-[113px] text-[98px] leading-[113px] font-light whitespace-nowrap italic [-webkit-text-stroke:0.7px_white]">Our Location</h1>
            <p className="pt-[1px] text-center text-[18px] leading-[27px] font-medium tracking-[0.5px] whitespace-nowrap">
              See the location of connected users.
              <br />
              Development and web design by: <span className="text-[#ffd600]">Hernan.Reiq</span>
            </p>
          </div>
          <div className="h-[3px] bg-linear-to-r from-white/0 via-white to-white/0" />
        </header>
        <main className="flex flex-col pr-[24px] pl-[21px]">
          <h3 className="flex h-[65px] items-start justify-center gap-[7px] pt-[21px] text-[26px] leading-[36px] font-light tracking-[0.1px]">
            Users online
            <span className="mt-[6px] flex h-[30px] w-[35px] items-center justify-center rounded-[15px] bg-[#42ae68] text-[19px] leading-none">1</span>
          </h3>
          <div className="relative h-[551px] shadow-[0_0_12px_rgba(0,0,0,0.45)]">
            <MapCanvas />
            <ZoomControl />
            <UserMarker />
            <div className="absolute right-0 bottom-0 h-[16px] bg-white/75 px-[5px] font-['Liberation_Sans',sans-serif] text-[11px] leading-[16px] text-[#0078a8]">Leaflet</div>
          </div>
          <div className="mt-[32px] flex h-[45px] items-center justify-between border border-[#e3f4fa] bg-[#5bc0de] pr-[21px] pb-[1px] pl-[20px]">
            <span className="text-[13px] tracking-[0.1px]">An user has disconnected</span>
            <svg className="size-[11px]" viewBox="0 0 11 11" fill="none"><path d="M1 1L10 10M10 1L1 10" stroke="#c4e8f4" strokeWidth="3" /></svg>
          </div>
        </main>
      </div>
      <ScrollBar />
    </div>
  );
}
